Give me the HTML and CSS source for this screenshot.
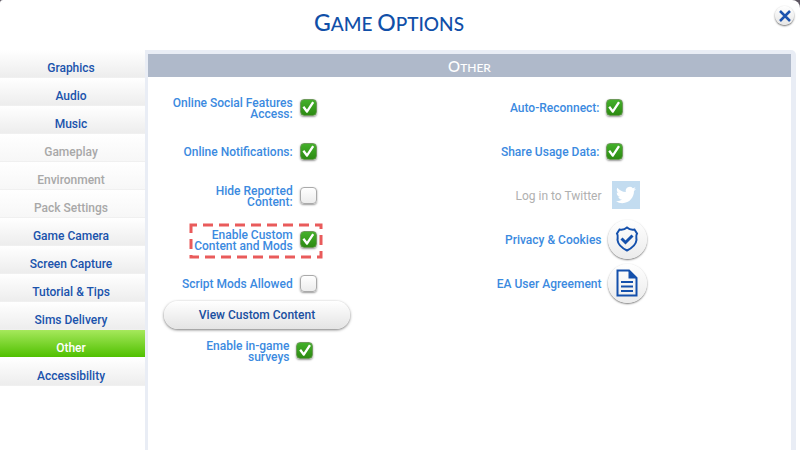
FILE: index.html
```html
<!DOCTYPE html>
<html lang="en">
<head>
    <meta charset="UTF-8">
    <meta name="viewport" content="width=device-width, initial-scale=1.0">
    <title>Game Options</title>
    <link rel="stylesheet" href="styles.css">
</head>
<body>
    <div class="window">
        <header class="titlebar">
            <h1><span class="cap">G</span>AME <span class="cap">O</span>PTIONS</h1>
            <button class="close" type="button" aria-label="Close">
                <svg width="12" height="12" viewBox="0 0 12 12"><path d="M1 1L11 11M11 1L1 11"/></svg>
            </button>
        </header>

        <div class="main">
            <nav class="sidebar">
                <button type="button">Graphics</button>
                <button type="button">Audio</button>
                <button type="button">Music</button>
                <button type="button" disabled>Gameplay</button>
                <button type="button" disabled>Environment</button>
                <button type="button" disabled>Pack Settings</button>
                <button type="button">Game Camera</button>
                <button type="button">Screen Capture</button>
                <button type="button">Tutorial &amp; Tips</button>
                <button type="button">Sims Delivery</button>
                <button type="button" class="active">Other</button>
                <button type="button">Accessibility</button>
            </nav>

            <section class="panel">
                <h2><span class="cap">O</span>THER</h2>
                <div class="options">
                    <div class="column left">
                        <div class="row">
                            <label for="social">Online Social Features<br>Access:</label>
                            <input type="checkbox" id="social" checked>
                        </div>
                        <div class="row">
                            <label for="notifications">Online Notifications:</label>
                            <input type="checkbox" id="notifications" checked>
                        </div>
                        <div class="row">
                            <label for="reported">Hide Reported<br>Content:</label>
                            <input type="checkbox" id="reported">
                        </div>
                        <div class="row">
                            <label for="mods">Enable Custom<br>Content and Mods</label>
                            <span class="marked">
                                <input type="checkbox" id="mods" checked>
                                <svg class="highlight" width="134" height="36" viewBox="0 0 134 36"><rect x="2" y="2" width="130" height="32"/></svg>
                            </span>
                        </div>
                        <div class="row">
                            <label for="script">Script Mods Allowed</label>
                            <input type="checkbox" id="script">
                        </div>
                        <button class="view" type="button">View Custom Content</button>
                        <div class="row surveys">
                            <label for="surveys">Enable in-game<br>surveys</label>
                            <input type="checkbox" id="surveys" checked>
                        </div>
                    </div>

                    <div class="column right">
                        <div class="row">
                            <label for="reconnect">Auto-Reconnect:</label>
                            <input type="checkbox" id="reconnect" checked>
                        </div>
                        <div class="row">
                            <label for="usage">Share Usage Data:</label>
                            <input type="checkbox" id="usage" checked>
                        </div>
                        <div class="row link-row disabled">
                            <label for="twitter">Log in to Twitter</label>
                            <button class="twitter" id="twitter" type="button" disabled>
                                <svg width="20" height="20" viewBox="0 0 24 24"><path d="M23.953 4.57a10 10 0 01-2.825.775 4.958 4.958 0 002.163-2.723c-.951.555-2.005.959-3.127 1.184a4.92 4.92 0 00-8.384 4.482C7.69 8.095 4.067 6.13 1.64 3.162a4.822 4.822 0 00-.666 2.475c0 1.71.87 3.213 2.188 4.096a4.904 4.904 0 01-2.228-.616v.06a4.923 4.923 0 003.946 4.827 4.996 4.996 0 01-2.212.085 4.936 4.936 0 004.604 3.417 9.867 9.867 0 01-6.102 2.105c-.39 0-.779-.023-1.17-.067a13.995 13.995 0 007.557 2.209c9.053 0 13.998-7.496 13.998-13.985 0-.21 0-.42-.015-.63A9.935 9.935 0 0024 4.59z"/></svg>
                            </button>
                        </div>
                        <div class="row link-row">
                            <label for="privacy">Privacy &amp; Cookies</label>
                            <button class="round" id="privacy" type="button">
                                <svg width="24" height="26" viewBox="0 0 24 26"><path d="M12 1.5C10 3.3 7 4 4.5 3.5L2 7.5C3.5 10 2.5 12 2.5 14C3 19 8 22.5 12 24.5C16 22.5 21 19 21.5 14C21.5 12 20.5 10 22 7.5L19.5 3.5C17 4 14 3.3 12 1.5Z"/><path class="tick" d="M6.5 12.5L10.5 16.5L17.5 9.5"/></svg>
                            </button>
                        </div>
                        <div class="row link-row">
                            <label for="agreement">EA User Agreement</label>
                            <button class="round" id="agreement" type="button">
                                <svg width="22" height="28" viewBox="0 0 22 28"><path d="M1.5 1.5H13L20.5 9V26.5H1.5Z"/><path class="fold" d="M12.5 1V9.5H21Z"/><path d="M5 13H17M5 17.5H17M5 22H17"/></svg>
                            </button>
                        </div>
                    </div>
                </div>
            </section>
        </div>
    </div>
</body>
</html>
```

FILE: styles.css
```css
* {
    box-sizing: border-box;
}

body {
    margin: 0;
    background: #5c5560;
    color: #3b8ae0;
    font-family: Roboto, "Liberation Sans", sans-serif;
    font-size: 12px;
    font-weight: 500;
}

button {
    font: inherit;
    border: 0;
    padding: 0;
    cursor: pointer;
}

h1, h2 {
    margin: 0;
    font-family: Lato, sans-serif;
    font-weight: 500;
    text-align: center;
}

.window {
    display: flex;
    flex-direction: column;
    min-height: 100vh;
    background: #fff;
    border-radius: 3px 8px 0 0;
}

.titlebar {
    position: relative;
    height: 50px;
    padding: 7px 40px 0;
}

.titlebar h1 {
    color: #104fa8;
    font-size: 19px;
    line-height: 30px;
    padding-right: 22px;
}

.titlebar .cap {
    font-size: 23px;
}

.close {
    position: absolute;
    top: 6px;
    right: 6px;
    display: grid;
    place-items: center;
    width: 19px;
    height: 19px;
    border-radius: 50%;
    background: linear-gradient(#fff, #e6e6e6);
    box-shadow: 0 1px 2px #666;
}

.close svg {
    stroke: #1b52ae;
    stroke-width: 2.5;
}

.main {
    display: flex;
    flex: 1;
    padding-right: 4px;
}

.sidebar {
    width: 145px;
    flex: none;
}

.sidebar button {
    display: block;
    width: 100%;
    height: 28px;
    padding: 9px 3px 0 0;
    background: linear-gradient(#fff, #ededed);
    border-bottom: 1px solid #f0f0f0;
    color: #1a53ac;
}

.sidebar button:disabled {
    background: linear-gradient(#fff, #f7f7f7);
    color: #a8a8a8;
}

.sidebar button.active {
    background: linear-gradient(#a6e85c, #50c000);
    border-bottom-color: #fff;
    color: #fff;
}

.panel {
    flex: 1;
    border: solid #e9edf5;
    border-width: 4px 5px 0 3px;
    border-radius: 0 5px 0 0;
}

.panel h2 {
    height: 23px;
    background: #afb9ca;
    color: #fff;
    font-size: 12px;
    line-height: 24px;
}

.panel .cap {
    font-size: 15px;
}

.options {
    display: grid;
    grid-template-columns: 1fr 1fr;
    padding-top: 8px;
}

.row {
    display: grid;
    grid-template-columns: 45% auto;
    align-items: center;
    justify-items: start;
    column-gap: 7px;
    height: 44px;
}

.row label {
    justify-self: end;
    padding-top: 3px;
    line-height: 11px;
    text-align: right;
}

.right .row {
    grid-template-columns: 130px auto;
    column-gap: 6px;
}

.right .link-row {
    grid-template-columns: 132px auto;
}

.right .disabled {
    color: #b0b0b0;
    font-weight: 400;
}

input[type="checkbox"] {
    appearance: none;
    display: block;
    width: 17px;
    height: 17px;
    margin: 0;
    border: 1px solid #aaa;
    border-radius: 4px;
    background: linear-gradient(#fff, #ececec);
    box-shadow: 0 1px 2px #999;
}

input[type="checkbox"]:checked {
    border-color: #6f9a5c;
    background: linear-gradient(#43b02a, #2d8a12);
}

input[type="checkbox"]:checked::before {
    content: "";
    display: block;
    height: 100%;
    background: #fff;
    clip-path: polygon(12% 54%, 24% 44%, 42% 66%, 77% 14%, 90% 22%, 46% 88%, 38% 88%);
}

.marked {
    position: relative;
}

.highlight {
    position: absolute;
    top: -8px;
    right: -6px;
    pointer-events: none;
}

.highlight rect {
    fill: none;
    stroke: #e95b5b;
    stroke-width: 3;
    stroke-dasharray: 10 6;
    stroke-dashoffset: 4;
}

.view {
    display: block;
    width: 186px;
    height: 28px;
    margin: -4px 0 0 16px;
    border-radius: 14px;
    background: linear-gradient(#fff, #e4e4e4);
    box-shadow: 0 1px 3px #777;
    color: #1a4fa0;
}

.surveys {
    grid-template-columns: 44% auto;
    height: 42px;
}

.twitter {
    display: grid;
    place-items: center;
    width: 28px;
    height: 28px;
    margin-left: 4px;
    background: #c3dcf0;
}

.twitter svg {
    fill: #fff;
}

.round {
    display: grid;
    place-items: center;
    width: 39px;
    height: 39px;
    border-radius: 50%;
    background: linear-gradient(#fff, #ebebeb);
    box-shadow: 0 1px 2px #777;
}

.round svg {
    fill: none;
    stroke: #1450ac;
    stroke-width: 2;
}

.round .tick {
    stroke-width: 3;
}

.round .fold {
    fill: #1450ac;
    stroke: none;
}
```
